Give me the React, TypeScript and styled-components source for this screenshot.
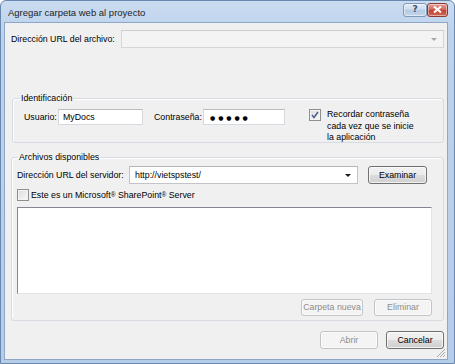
import styled, { createGlobalStyle } from 'styled-components';

const GlobalStyle = createGlobalStyle`
  html, body {
    margin: 0;
    padding: 0;
    background: #ffffff;
  }
  * {
    box-sizing: border-box;
  }
`;

const Window = styled.div`
  width: 455px;
  height: 364px;
  display: flex;
  flex-direction: column;
  border: 1px solid #6a88ad;
  border-radius: 6px 6px 0 0;
  background: linear-gradient(#cadcf1, #bdd2ec 30px, #b6cde9);
  padding: 0 6px 3px 3px;
  font-family: 'Liberation Sans', Arial, sans-serif;
  font-size: 8.8px;
  color: #000000;
`;

const TitleBar = styled.div`
  height: 21px;
  display: flex;
  align-items: center;
  padding-left: 4px;
`;

const Title = styled.div`
  flex: 1;
  font-size: 9.5px;
  color: #1e1e1e;
  padding-top: 1px;
`;

const CaptionButton = styled.div<{ $variant: 'help' | 'close' }>`
  height: 14px;
  width: ${p => (p.$variant === 'close' ? '21px' : '24px')};
  margin-top: -4px;
  border: 1px solid ${p => (p.$variant === 'close' ? '#8d3a32' : '#7f98b7')};
  border-radius: 3px;
  display: flex;
  align-items: center;
  justify-content: center;
  background: ${p => (p.$variant === 'close'
    ? 'linear-gradient(#e2a49c, #cf6153 50%, #c2402f 51%, #cf6a5a)'
    : 'linear-gradient(#e4edf7, #c9d8ea 50%, #b5c9e1 51%, #c6d7ec)')};
  box-shadow: inset 0 0 0 1px rgba(255, 255, 255, 0.45);
`;

const HelpGlyph = styled.span`
  font-family: 'DejaVu Sans', sans-serif;
  font-size: 9px;
  font-weight: bold;
  color: #3f4f66;
  line-height: 1;
`;

const Client = styled.div`
  flex: 1;
  display: flex;
  flex-direction: column;
  background: #f0f0f0;
  border: 1px solid #8ea7c6;
  padding: 7px 3px 0 6px;
  position: relative;
`;

const Row = styled.div<{ $top?: number; $align?: string }>`
  display: flex;
  align-items: ${p => p.$align || 'center'};
  margin-top: ${p => p.$top || 0}px;
`;

const Label = styled.span<{ $width?: number; $gap?: number }>`
  flex: none;
  width: ${p => (p.$width ? `${p.$width}px` : 'auto')};
  margin-left: ${p => p.$gap || 0}px;
  white-space: nowrap;
`;

const Combo = styled.div<{ $disabled?: boolean; $width?: number }>`
  height: 18px;
  flex: ${p => (p.$width ? 'none' : '1')};
  width: ${p => (p.$width ? `${p.$width}px` : 'auto')};
  display: flex;
  align-items: center;
  padding: 0 4px 0 5px;
  background: ${p => (p.$disabled ? '#f4f4f4' : '#ffffff')};
  border: 1px solid ${p => (p.$disabled ? '#d6d6d6' : '#c2c4c8')};
  border-top-color: ${p => (p.$disabled ? '#cdcdcd' : '#b3b5ba')};
`;

const ComboText = styled.span`
  flex: 1;
  white-space: nowrap;
`;

const Arrow = styled.span<{ $disabled?: boolean }>`
  width: 0;
  height: 0;
  border-left: 3px solid transparent;
  border-right: 3px solid transparent;
  border-top: 3px solid ${p => (p.$disabled ? '#a8a8a8' : '#1a1a1a')};
  margin-right: 2px;
`;

const Group = styled.fieldset<{ $top: number; $left?: number; $height: number }>`
  margin: ${p => p.$top}px 0 0 ${p => p.$left || 0}px;
  padding: 0 5px 5px 5px;
  min-width: 0;
  height: ${p => p.$height}px;
  border: 1px solid #d5dbe1;
  border-radius: 3px;
  box-shadow: inset 1px 1px 0 #ffffff;
  display: flex;
  flex-direction: column;
`;

const Legend = styled.legend<{ $indent: number }>`
  padding: 0 1px;
  margin-left: ${p => p.$indent}px;
  line-height: 12px;
`;

const TextField = styled.input<{ $width: number }>`
  flex: none;
  width: ${p => p.$width}px;
  height: 16px;
  margin: 0;
  padding: 0 4px;
  border: 1px solid #d6d9dd;
  border-top-color: #b9bcc1;
  background: #ffffff;
  font-family: 'Liberation Sans', Arial, sans-serif;
  font-size: 8.8px;
  color: #000000;
  outline: none;
`;

const PasswordField = styled(TextField)`
  font-family: 'DejaVu Sans', sans-serif;
  font-size: 6px;
  letter-spacing: 2.9px;
  padding-left: 6px;
`;

const CheckBox = styled.span<{ $gap?: number }>`
  flex: none;
  width: 12px;
  height: 12px;
  margin-left: ${p => p.$gap || 0}px;
  border: 1px solid #8f8f8f;
  background: linear-gradient(135deg, #dcdcdc, #f9f9f9);
  box-shadow: inset 0 0 0 1px #f4f4f4;
  display: flex;
  align-items: center;
  justify-content: center;
`;

const CheckText = styled.span<{ $gap: number }>`
  margin-left: ${p => p.$gap}px;
  line-height: 11.5px;
  white-space: nowrap;
`;

const Mark = styled.span`
  font-size: 6.5px;
  vertical-align: 1px;
`;

const Button = styled.div<{ $width: number; $disabled?: boolean; $gap?: number; $height?: number }>`
  flex: none;
  width: ${p => p.$width}px;
  height: ${p => p.$height || 18}px;
  margin-left: ${p => p.$gap || 0}px;
  display: flex;
  align-items: center;
  justify-content: center;
  border: 1px solid ${p => (p.$disabled ? '#c1c5c9' : '#707070')};
  border-radius: 3px;
  color: ${p => (p.$disabled ? '#8d8d8d' : '#000000')};
  background: ${p => (p.$disabled
    ? '#f4f4f4'
    : 'linear-gradient(#f2f2f2, #ebebeb 50%, #dddddd 51%, #cfcfcf)')};
  box-shadow: inset 0 0 0 1px ${p => (p.$disabled ? '#fbfbfb' : 'rgba(255,255,255,0.7)')};
  white-space: nowrap;
`;

const ListBox = styled.div`
  height: 87px;
  margin-top: 5px;
  margin-right: 6px;
  background: #ffffff;
  border: 1px solid #e2e3e5;
  border-top-color: #828790;
  border-left-color: #828790;
`;

const ButtonRow = styled.div<{ $top: number; $right?: number }>`
  display: flex;
  justify-content: flex-end;
  margin-top: ${p => p.$top}px;
  margin-right: ${p => p.$right || 0}px;
`;

const Grip = styled.svg`
  position: absolute;
  right: 1px;
  bottom: 1px;
`;

const Check = () => (
  <svg width="8" height="8" viewBox="0 0 8 8">
    <path d="M1 4 L3 6.5 L7 1" fill="none" stroke="#4a5f8c" strokeWidth="1.5" />
  </svg>
);

const App = (): JSX.Element => (
  <>
    <GlobalStyle />
    <Window>
      <TitleBar>
        <Title>Agregar carpeta web al proyecto</Title>
        <CaptionButton $variant='help'>
          <HelpGlyph>?</HelpGlyph>
        </CaptionButton>
        <CaptionButton $variant='close'>
          <svg width="9" height="7" viewBox="0 0 9 7">
            <path d="M1 0.5 L8 6.5 M8 0.5 L1 6.5" stroke="#ffffff" strokeWidth="2" />
          </svg>
        </CaptionButton>
      </TitleBar>
      <Client>
        <Row>
          <Label $width={110}>Dirección URL del archivo:</Label>
          <Combo $disabled>
            <ComboText />
            <Arrow $disabled />
          </Combo>
        </Row>

        <Group $top={44} $left={1} $height={51}>
          <Legend $indent={2}>Identificación</Legend>
          <Row $top={5} $align='flex-start'>
            <Row>
              <Label $width={34} $gap={6}>Usuario:</Label>
              <TextField $width={85} defaultValue='MyDocs' readOnly />
              <Label $width={49} $gap={11}>Contraseña:</Label>
              <PasswordField $width={82} defaultValue='●●●●●' readOnly />
            </Row>
            <CheckBox $gap={24}>
              <Check />
            </CheckBox>
            <CheckText $gap={6}>
              Recordar contraseña<br />
              cada vez que se inicie<br />
              la aplicación
            </CheckText>
          </Row>
        </Group>

        <Group $top={8} $height={170}>
          <Legend $indent={1}>Archivos disponibles</Legend>
          <Row $top={3}>
            <Label $width={112}>Dirección URL del servidor:</Label>
            <Combo $width={229}>
              <ComboText>http://vietspstest/</ComboText>
              <Arrow />
            </Combo>
            <Button $width={59} $gap={10}>Examinar</Button>
          </Row>
          <Row $top={5}>
            <CheckBox />
            <CheckText $gap={2}>
              Este es un Microsoft<Mark>®</Mark> SharePoint<Mark>®</Mark> Server
            </CheckText>
          </Row>
          <ListBox />
          <ButtonRow $top={5} $right={6}>
            <Button $width={62} $height={17} $disabled>Carpeta nueva</Button>
            <Button $width={58} $height={17} $gap={11} $disabled>Eliminar</Button>
          </ButtonRow>
        </Group>

        <ButtonRow $top={10}>
          <Button $width={58} $disabled>Abrir</Button>
          <Button $width={58} $gap={8}>Cancelar</Button>
        </ButtonRow>

        <Grip width="11" height="11" viewBox="0 0 11 11">
          <path d="M10 2 L2 10 M10 5 L5 10 M10 8 L8 10" stroke="#a9a9a9" strokeWidth="1" />
        </Grip>
      </Client>
    </Window>
  </>
);

export default App;
